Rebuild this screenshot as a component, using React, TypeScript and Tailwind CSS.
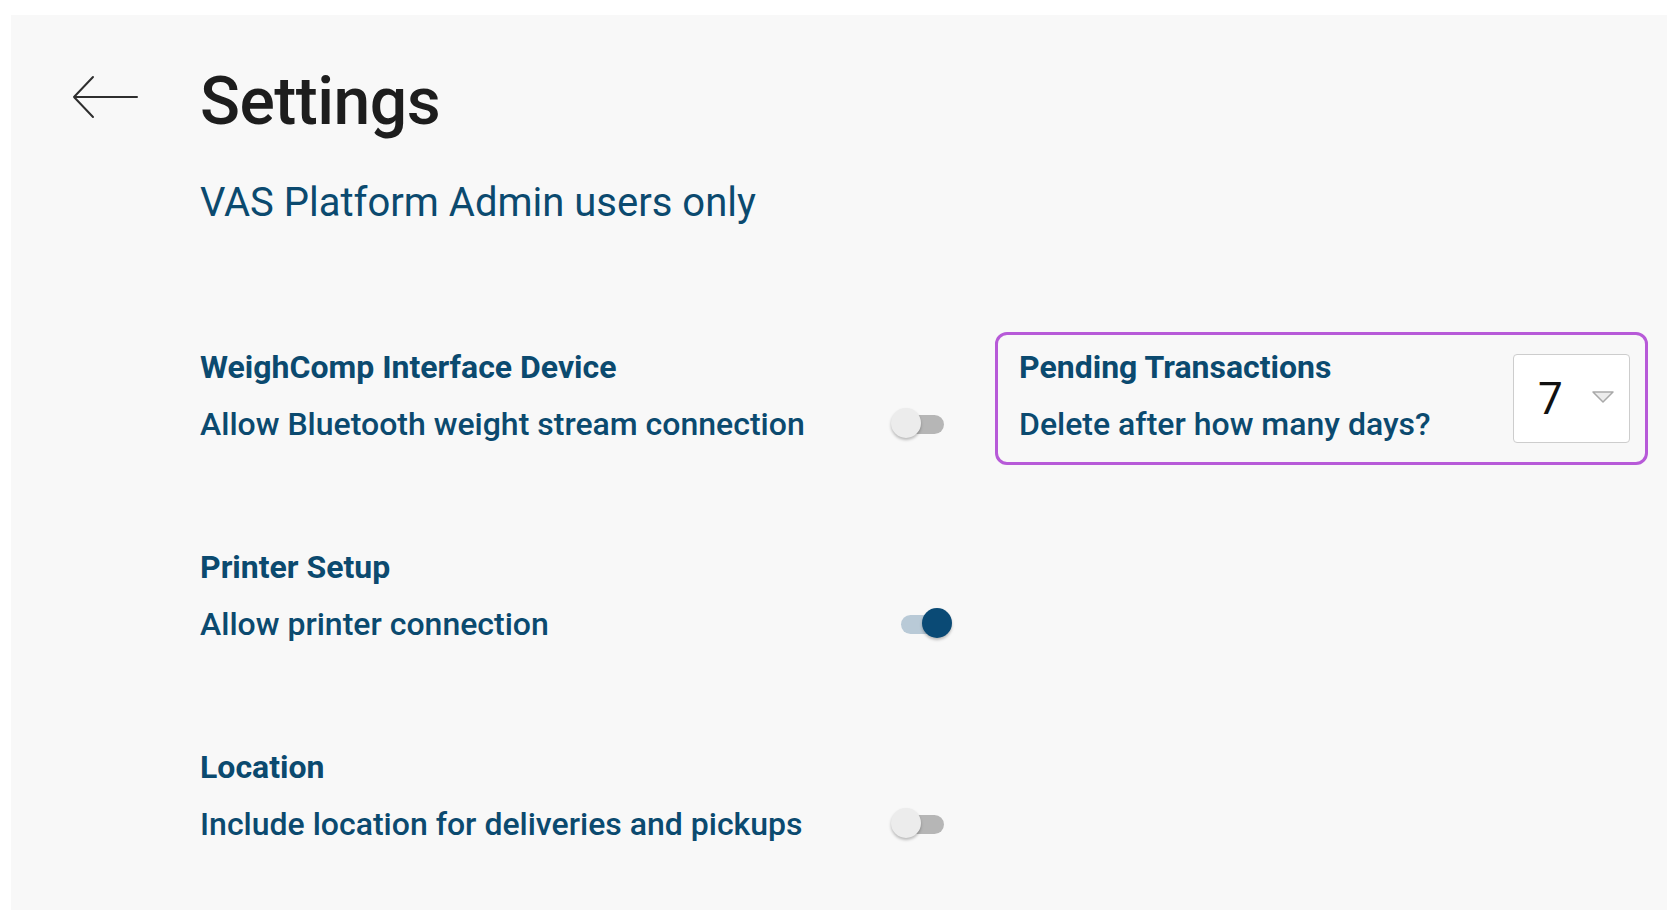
import { useState } from "react";

const font = { fontFamily: "Roboto, 'Noto Sans', sans-serif" };

interface SwitchProps {
  on: boolean;
  onToggle: () => void;
}

// material style switch: thumb overhangs the track on both ends
const Switch = ({ on, onToggle }: SwitchProps) => {
  return (
    <button
      onClick={onToggle}
      className="relative w-[61px] h-[32px] shrink-0"
      aria-pressed={on}
    >
      <span
        className={`absolute left-[10px] top-[7px] w-[43px] h-[19px] rounded-full ${
          on ? "bg-[#b9cad7]" : "bg-[#b6b6b6]"
        }`}
      />
      {on ? (
        <span className="absolute left-[31px] top-0 w-[30px] h-[30px] rounded-full bg-[#0a4a75] shadow-[0_2px_3px_rgba(0,0,0,0.25)]" />
      ) : (
        <span className="absolute left-0 top-0 w-[30px] h-[30px] rounded-full bg-[#ececec] shadow-[0_2px_3px_rgba(0,0,0,0.25)]" />
      )}
    </button>
  );
};

const sections = [
  {
    id: "weighcomp",
    title: "WeighComp Interface Device",
    label: "Allow Bluetooth weight stream connection",
    on: false,
  },
  {
    id: "printer",
    title: "Printer Setup",
    label: "Allow printer connection",
    on: true,
  },
  {
    id: "location",
    title: "Location",
    label: "Include location for deliveries and pickups",
    on: false,
  },
];

export default function App() {
  const [toggles, setToggles] = useState<Record<string, boolean>>(
    Object.fromEntries(sections.map((s) => [s.id, s.on]))
  );

  return (
    <div className="min-h-screen bg-white pt-[15px] pl-[11px]" style={font}>
      <div className="bg-[#f8f8f8] min-h-[895px] pb-10">
        {/* header */}
        <div className="flex items-start pt-[54px]">
          <div className="w-[189px] pl-[61px] pt-[6px]">
            <svg width="66" height="44" viewBox="0 0 66 44" fill="none">
              <path
                d="M2 22 H65 M2 22 L21 2 M2 22 L21 42"
                stroke="#2e2e2e"
                strokeWidth="2"
                strokeLinecap="round"
                strokeLinejoin="round"
              />
            </svg>
          </div>
          <h1 className="text-[66px] leading-[66px] font-medium text-[#1d1d1d] tracking-[-0.5px]">
            Settings
          </h1>
        </div>

        <div className="pl-[189px]">
          <h2 className="mt-[44px] text-[40px] leading-[48px] text-[#0b4a6f]">
            VAS Platform Admin users only
          </h2>

          <div className="mt-[105px] flex items-start gap-[43px]">
            {/* left column */}
            <div className="w-[752px] pt-[15px] flex flex-col gap-[103px]">
              {sections.map((s) => (
                <div key={s.id}>
                  <h3 className="text-[32px] leading-[40px] font-bold text-[#0b4a6f]">
                    {s.title}
                  </h3>
                  <div className="mt-[17px] flex items-center justify-between">
                    <p className="text-[32px] leading-[40px] font-medium text-[#0b4a6f]">
                      {s.label}
                    </p>
                    <Switch
                      on={toggles[s.id]}
                      onToggle={() =>
                        setToggles((t) => ({ ...t, [s.id]: !t[s.id] }))
                      }
                    />
                  </div>
                </div>
              ))}
            </div>

            {/* pending transactions */}
            <div className="w-[653px] h-[133px] border-[3px] border-[#b75ad8] rounded-[12px] pl-[21px] pr-[15px] flex items-center justify-between">
              <div className="-mt-[6px]">
                <h3 className="text-[32px] leading-[40px] font-bold text-[#0b4a6f]">
                  Pending Transactions
                </h3>
                <p className="mt-[17px] text-[32px] leading-[40px] font-medium text-[#0b4a6f]">
                  Delete after how many days?
                </p>
              </div>
              <div className="w-[117px] h-[89px] bg-white border-[1.5px] border-[#cdcdcd] rounded-[4px] flex items-center pl-[24px] pr-[14px] justify-between">
                <span className="text-[44px] text-[#111]">7</span>
                <svg width="24" height="14" viewBox="0 0 24 14" className="mb-1">
                  <polygon
                    points="2,2 22,2 12,12"
                    fill="#ececec"
                    stroke="#a9a9a9"
                    strokeWidth="1.5"
                    strokeLinejoin="round"
                  />
                </svg>
              </div>
            </div>
          </div>
        </div>
      </div>
    </div>
  );
}
